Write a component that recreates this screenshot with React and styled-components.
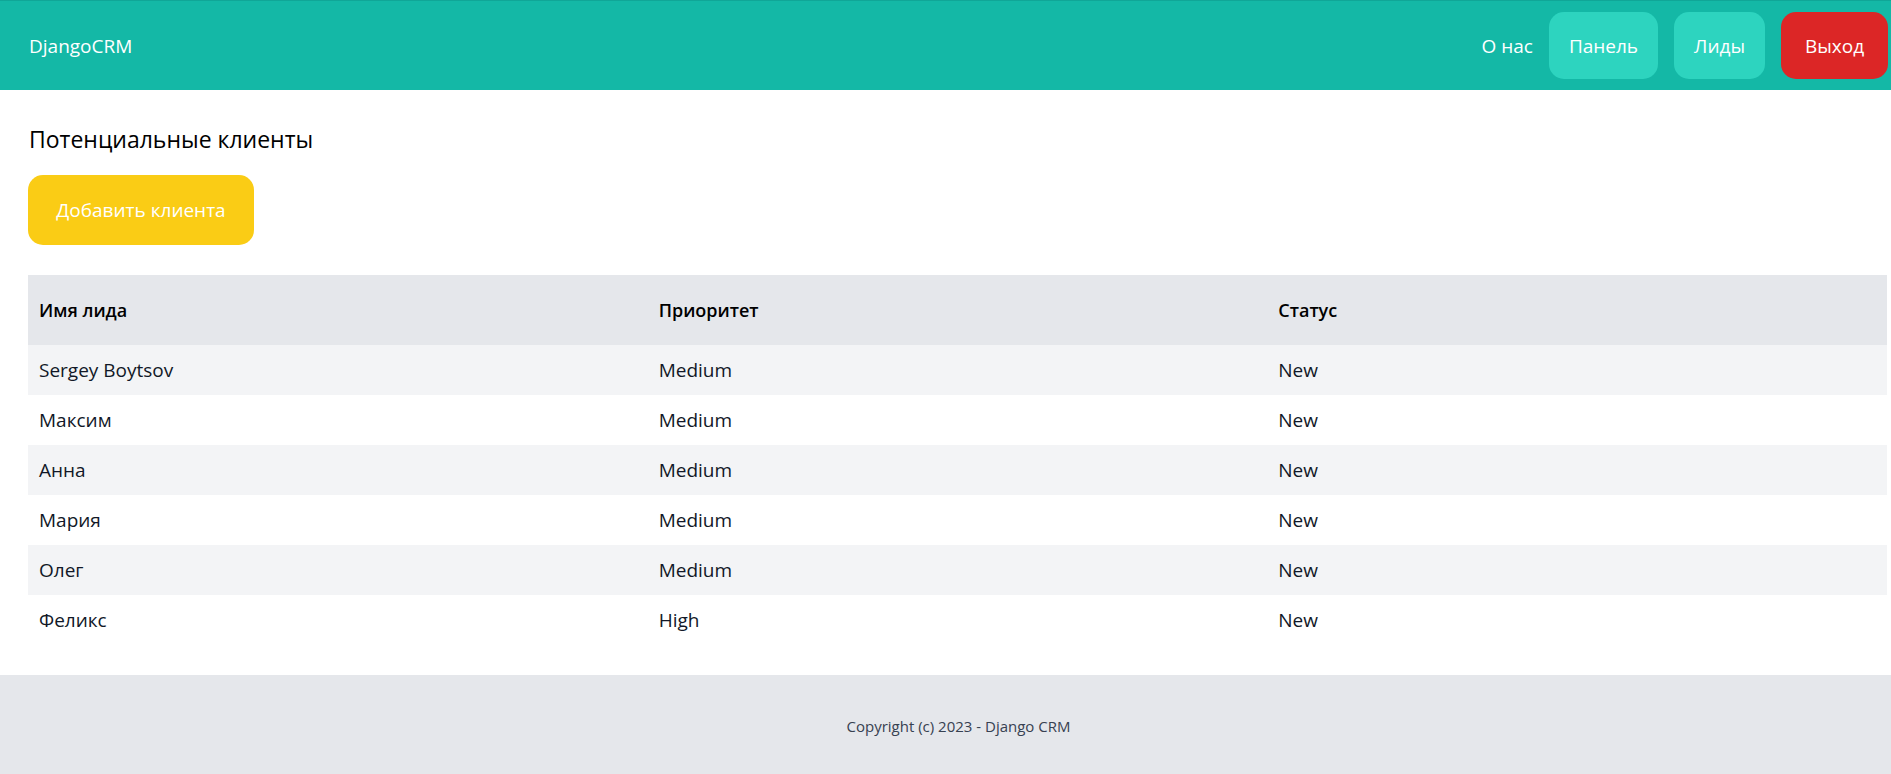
import React from "react";
import styled, { createGlobalStyle } from "styled-components";

const GlobalStyle = createGlobalStyle`
    * {
        box-sizing: border-box;
    }
    body {
        margin: 0;
        background: #ffffff;
        font-family: "Open Sans", "Noto Sans", "Liberation Sans", sans-serif;
        color: #111827;
    }
`;

const Nav = styled.nav`
    display: flex;
    justify-content: space-between;
    align-items: center;
    height: 90px;
    padding: 0 3px 0 29px;
    background-color: #14b8a6;
    border-top: 1px solid #10a697;
`;

const Logo = styled.a`
    color: #ffffff;
    font-size: 19px;
    text-decoration: none;
`;

const NavLinks = styled.div`
    display: flex;
    align-items: center;
    gap: 16px;
`;

const NavLink = styled.a`
    display: flex;
    align-items: center;
    justify-content: center;
    height: 67px;
    padding: ${(props) => (props.plain ? "0" : "0 20px")};
    min-width: ${(props) => props.width || 0}px;
    border-radius: 15px;
    color: #ffffff;
    font-size: 19px;
    text-decoration: none;
    background-color: ${(props) => props.bg || "transparent"};
`;

const Main = styled.main`
    padding: 31px 4px 30px 28px;
`;

const Title = styled.h1`
    margin: 0 0 18px 1px;
    font-size: 23px;
    font-weight: 400;
    line-height: 36px;
    color: #000000;
`;

const AddButton = styled.button`
    height: 70px;
    width: 226px;
    border: none;
    border-radius: 15px;
    background-color: #facc15;
    color: #ffffff;
    font-family: inherit;
    font-size: 19px;
    cursor: pointer;
`;

const Table = styled.table`
    width: 100%;
    margin-top: 30px;
    border-collapse: collapse;
    table-layout: fixed;
`;

const HeadRow = styled.tr`
    height: 70px;
    background-color: #e5e7eb;
`;

const Row = styled.tr`
    height: 50px;
    background-color: ${(props) => (props.striped ? "#f3f4f6" : "#ffffff")};
`;

const HeadCell = styled.th`
    padding: 0 11px;
    text-align: left;
    font-size: 18px;
    font-weight: 600;
    color: #000000;
`;

const Cell = styled.td`
    padding: 0 11px;
    font-size: 19px;
    color: #111827;
`;

const Footer = styled.footer`
    display: flex;
    justify-content: center;
    align-items: center;
    height: 102px;
    padding-left: 26px;
    background-color: #e5e7eb;
    color: #374151;
    font-size: 15px;
`;

const leads = [
    { name: "Sergey Boytsov", priority: "Medium", status: "New" },
    { name: "Максим", priority: "Medium", status: "New" },
    { name: "Анна", priority: "Medium", status: "New" },
    { name: "Мария", priority: "Medium", status: "New" },
    { name: "Олег", priority: "Medium", status: "New" },
    { name: "Феликс", priority: "High", status: "New" },
];

export default function App() {
    return (
        <>
            <GlobalStyle />
            <Nav>
                <Logo href="#">DjangoCRM</Logo>
                <NavLinks>
                    <NavLink plain href="#">
                        О нас
                    </NavLink>
                    <NavLink href="#" bg="#2dd4bf" width={107}>
                        Панель
                    </NavLink>
                    <NavLink href="#" bg="#2dd4bf" width={90}>
                        Лиды
                    </NavLink>
                    <NavLink href="#" bg="#dc2626" width={107}>
                        Выход
                    </NavLink>
                </NavLinks>
            </Nav>
            <Main>
                <Title>Потенциальные клиенты</Title>
                <AddButton>Добавить клиента</AddButton>
                <Table>
                    <thead>
                        <HeadRow>
                            <HeadCell>Имя лида</HeadCell>
                            <HeadCell>Приоритет</HeadCell>
                            <HeadCell>Статус</HeadCell>
                        </HeadRow>
                    </thead>
                    <tbody>
                        {leads.map((lead, i) => (
                            <Row key={lead.name} striped={i % 2 === 0}>
                                <Cell>{lead.name}</Cell>
                                <Cell>{lead.priority}</Cell>
                                <Cell>{lead.status}</Cell>
                            </Row>
                        ))}
                    </tbody>
                </Table>
            </Main>
            <Footer>Copyright (c) 2023 - Django CRM</Footer>
        </>
    );
}
